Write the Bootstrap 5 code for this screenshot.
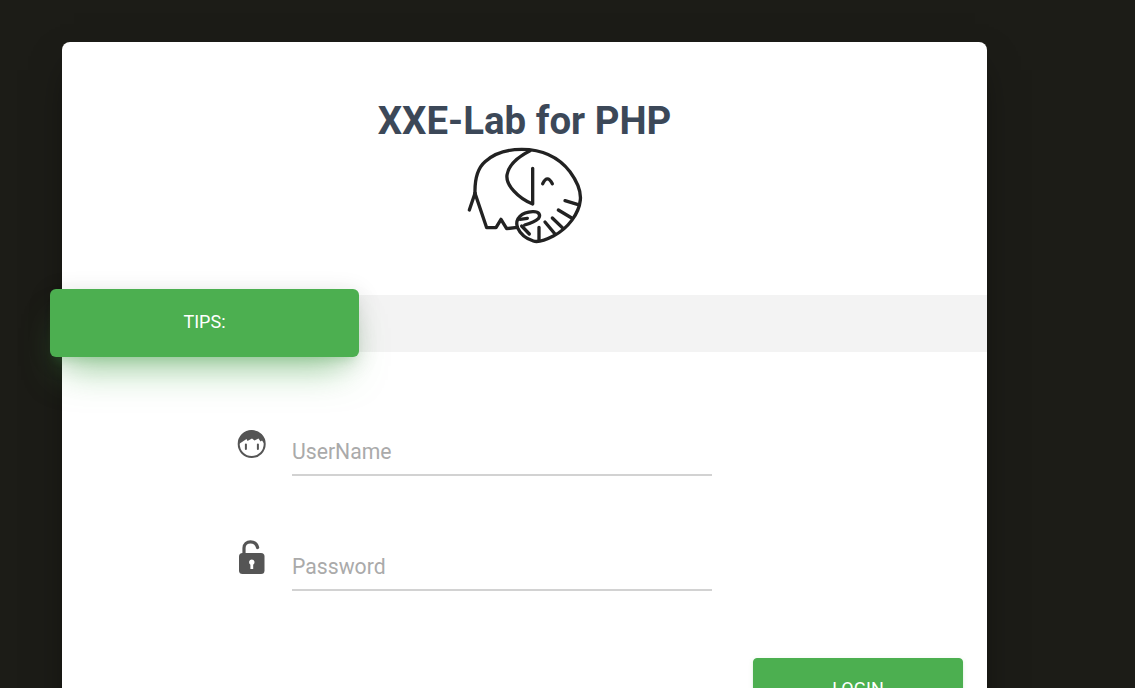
<!DOCTYPE html>
<html lang="en">
<head>
<meta charset="utf-8">
<title>XXE-Lab for PHP</title>
<link href="https://cdn.jsdelivr.net/npm/bootstrap@5.3.0/dist/css/bootstrap.min.css" rel="stylesheet">
<style>
html, body { height: 688px; overflow: hidden; }
body { background: #1c1c17; font-family: Roboto, "Liberation Sans", sans-serif; }
.login-panel { width: 925px; margin: 42px 0 0 62px; background: #fff; border-radius: 8px; padding-bottom: 60px; box-shadow: 0 16px 38px -12px rgba(0,0,0,.56); }
.panel-title { margin: 0; padding-top: 56px; height: 88px; font-size: 38.4px; line-height: 46px; font-weight: 700; color: #3c4858; text-align: center; }
.logo-wrap { height: 165px; }
.logo-wrap svg { display: block; margin: 0 auto; }
.tips-band { position: relative; height: 57px; background: #f3f3f3; }
.tips-box { position: absolute; left: -12px; top: -6px; width: 309px; height: 68px; padding-bottom: 3px; background: #4caf50; color: #fff; border-radius: 6px; font-size: 18px; box-shadow: 0 24px 38px -14px rgba(76,175,80,.56), 0 4px 25px 0 rgba(0,0,0,.12), 0 8px 10px -5px rgba(76,175,80,.2); }
.login-form { padding: 76px 0 0 175px; }
.field-row { width: 475px; height: 115px; }
.field-icon { width: 30px; height: 36px; flex: none; margin-right: 25px; margin-top: 1px; }
.field-lock { margin-top: -4px; }
.field-input { width: 420px; height: 48px; border: 0; border-bottom: 2px solid #d2d2d2; outline: 0; padding: 0; background: transparent; font-size: 21.2px; font-family: inherit; color: #555; }
.field-input::placeholder { color: #aaa; opacity: 1; }
.login-btn { display: block; width: 210px; height: 60px; margin: 0 0 0 516px; background: #4caf50; border-color: #4caf50; color: #fff; font-size: 18px; border-radius: 4px; padding: 0; box-shadow: 0 2px 2px 0 rgba(76,175,80,.14), 0 3px 1px -2px rgba(76,175,80,.2), 0 1px 5px 0 rgba(76,175,80,.12); }
</style>
</head>
<body>
<div class="login-panel">
  <h1 class="panel-title">XXE-Lab for PHP</h1>
  <div class="logo-wrap">
    <svg width="170" height="125" viewBox="0 0 510 375" fill="none" stroke="#222" stroke-width="10" stroke-linecap="round" stroke-linejoin="round" aria-label="elephant">
      <path d="M88 240L105 190"/>
      <path d="M105 190C104 150 112 115 135 95C165 68 205 58 245 58C305 58 355 80 390 125C412 155 424 180 421 210C417 250 385 295 340 318C315 331 295 338 280 333C258 326 240 310 232 292"/>
      <path d="M105 190L140 293L168 293L183 268L200 296L232 292"/>
      <path d="M270 62C235 80 205 105 201 135C197 165 235 205 278 222L278 115"/>
      <path d="M308 161Q322 132 337 161"/>
      <path d="M232 292C224 265 245 247 278 245C298 244 303 256 295 266C285 276 268 281 254 285"/>
      <path d="M240 268L262 265M245 288L268 312M297 292L297 330M315 276L345 312M337 264L370 296M355 240L395 264M375 212L412 223"/>
    </svg>
  </div>
  <div class="tips-band">
    <div class="tips-box d-flex align-items-center justify-content-center">TIPS:</div>
  </div>
  <form class="login-form">
    <div class="field-row d-flex align-items-start">
      <svg class="field-icon" viewBox="0 0 30 36" aria-hidden="true">
        <circle cx="14.7" cy="15" r="13" fill="#fff" stroke="#555" stroke-width="2"/>
        <path d="M2 15C2 7 8 1.5 14.7 1.5C21.5 1.5 27.5 7 27.5 15L25 11.5L23.5 12.5L21.5 9.5L17.5 11.5L15 9.5L10.5 12L9.5 10L5 13Z" fill="#555"/>
        <rect x="7.9" y="14.5" width="2" height="6.5" rx="1" fill="#555"/>
        <rect x="19.9" y="14.5" width="2" height="6.5" rx="1" fill="#555"/>
      </svg>
      <input class="field-input" type="text" placeholder="UserName">
    </div>
    <div class="field-row d-flex align-items-start">
      <svg class="field-icon field-lock" viewBox="0 0 30 36" aria-hidden="true">
        <path d="M7 15V9C7 5 10 2.8 13.5 2.8C17 2.8 19.6 4.6 20.6 8.5" fill="none" stroke="#555" stroke-width="3.2" stroke-linecap="round"/>
        <rect x="2" y="14" width="25.5" height="21" rx="3.5" fill="#555"/>
        <path d="M14.8 20.5a2.8 2.8 0 0 1 1.4 5.2V30h-2.8V25.7a2.8 2.8 0 0 1 1.4-5.2Z" fill="#fff"/>
      </svg>
      <input class="field-input" type="password" placeholder="Password">
    </div>
    <button type="button" class="btn login-btn">LOGIN</button>
  </form>
</div>
<script src="https://cdn.jsdelivr.net/npm/bootstrap@5.3.0/dist/js/bootstrap.bundle.min.js"></script>
</body>
</html>
